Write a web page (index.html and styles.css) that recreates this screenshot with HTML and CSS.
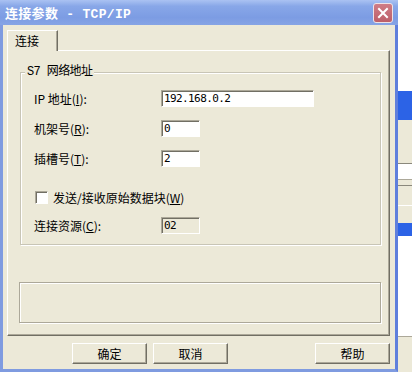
FILE: index.html
```html
<!DOCTYPE html>
<html lang="zh-CN">

<head>
    <meta charset="UTF-8">
    <title>连接参数 - TCP/IP</title>
    <link rel="stylesheet" href="styles.css">
</head>

<body>
    <div class="screen">
        <div class="window">
            <div class="titlebar">
                <span class="title">连接参数 - TCP/IP</span>
                <span class="close">
                    <svg width="12" height="12" viewBox="0 0 12 12">
                        <path d="M2 2 L10 10 M10 2 L2 10" stroke="#fff" stroke-width="2" stroke-linecap="square" />
                    </svg>
                </span>
            </div>
            <div class="frame">
                <div class="tabs">
                    <div class="tab">连接</div>
                </div>
                <div class="panel">
                    <fieldset class="group">
                        <legend>S7 网络地址</legend>
                        <div class="row">
                            <label>IP 地址(<u>I</u>):</label>
                            <div class="field wide">192.168.0.2</div>
                        </div>
                        <div class="row gap">
                            <label>机架号(<u>R</u>):</label>
                            <div class="field">0</div>
                        </div>
                        <div class="row gap">
                            <label>插槽号(<u>T</u>):</label>
                            <div class="field">2</div>
                        </div>
                        <div class="row check">
                            <span class="box"></span>
                            <span>发送/接收原始数据块(<u>W</u>)</span>
                        </div>
                        <div class="row res">
                            <label>连接资源(<u>C</u>):</label>
                            <div class="field readonly">02</div>
                        </div>
                    </fieldset>
                    <div class="status"></div>
                </div>
                <div class="buttons">
                    <button class="btn">确定</button>
                    <button class="btn">取消</button>
                    <button class="btn help">帮助</button>
                </div>
            </div>
        </div>
        <div class="side">
            <div class="s-white top"></div>
            <div class="s-blue first"></div>
            <div class="s-beige tall"></div>
            <div class="s-white mid"></div>
            <div class="s-beige short"></div>
            <div class="s-beige row2"></div>
            <div class="s-beige row3"></div>
            <div class="s-blue second"></div>
            <div class="s-white fill"></div>
            <div class="s-beige bottom"></div>
        </div>
    </div>
</body>

</html>
```

FILE: styles.css
```css
body {
    margin: 0;
    background: #fff;
    font-family: "Noto Sans CJK SC", sans-serif;
    font-size: 12px;
    color: #000;
}

.screen {
    display: flex;
    width: 412px;
    height: 372px;
    overflow: hidden;
}

.window {
    width: 398px;
    height: 372px;
    flex: none;
    display: flex;
    flex-direction: column;
}

.titlebar {
    height: 25px;
    flex: none;
    display: flex;
    align-items: center;
    justify-content: space-between;
    padding: 0 5px;
    background: linear-gradient(#aac2f2, #88a7e8 25%, #7c9ce3 70%, #86a4e5);
}

.title {
    color: #fff;
    font-weight: bold;
    font-size: 13px;
    font-family: "Liberation Mono", "Noto Sans CJK SC", monospace;
    letter-spacing: 0.3px;
}

.close {
    width: 18px;
    height: 18px;
    border: 1px solid #efe3e6;
    border-radius: 3px;
    background: linear-gradient(#cf7d86, #bd5f69);
    display: flex;
    align-items: center;
    justify-content: center;
}

.frame {
    flex: 1;
    background: #ece9d8;
    border: 3px solid #7f9be0;
    border-top: 0;
    border-right-color: #5f7fdc;
    display: flex;
    flex-direction: column;
    padding: 0 5px 0 4px;
}

.tabs {
    height: 25px;
    flex: none;
    display: flex;
    align-items: flex-end;
}

.tab {
    position: relative;
    z-index: 1;
    box-sizing: border-box;
    width: 51px;
    height: 21px;
    margin-bottom: -1px;
    padding: 2px 0 0 7px;
    background: #ece9d8;
    border-left: 1px solid #fff;
    border-top: 1px solid #fff;
    border-right: 1px solid #716f64;
    box-shadow: inset -1px 0 #aca899;
    line-height: 16px;
}

.panel {
    box-sizing: border-box;
    height: 286px;
    flex: none;
    border-top: 1px solid #fff;
    border-left: 1px solid #fff;
    border-right: 1px solid #716f64;
    border-bottom: 1px solid #716f64;
    box-shadow: inset -1px -1px #aca899;
    padding: 0 8px 0 12px;
}

.group {
    margin: 14px 0 0;
    padding: 11px 7px 10px 13px;
    border: 1px solid #c8c5b6;
    box-shadow: 1px 1px 0 #fff, inset 1px 1px 0 #fff;
}

.group legend {
    margin-left: -9px;
    padding: 0 2px;
    background: #ece9d8;
    line-height: 14px;
    font-family: "Liberation Mono", "Noto Sans CJK SC", monospace;
    letter-spacing: -0.6px;
}

.row {
    display: flex;
    align-items: center;
    height: 17px;
    line-height: 17px;
}

.row.gap {
    margin-top: 13px;
}

.row.check {
    margin-top: 22px;
    padding-left: 1px;
}

.row.res {
    margin-top: 11px;
}

.row label {
    width: 127px;
    flex: none;
}

.field {
    box-sizing: border-box;
    width: 39px;
    height: 17px;
    background: #fff;
    border-top: 1px solid #aca899;
    border-left: 1px solid #aca899;
    border-right: 1px solid #fff;
    border-bottom: 1px solid #fff;
    box-shadow: inset 1px 1px #716f64;
    padding-left: 2px;
    font-family: "DejaVu Sans Mono", monospace;
    font-size: 11px;
    letter-spacing: -0.6px;
    line-height: 15px;
}

.field.wide {
    width: 153px;
}

.field.readonly {
    background: #ece9d8;
}

.box {
    box-sizing: border-box;
    width: 13px;
    height: 13px;
    margin-right: 5px;
    background: #fff;
    border-top: 1px solid #aca899;
    border-left: 1px solid #aca899;
    border-right: 1px solid #fff;
    border-bottom: 1px solid #fff;
    box-shadow: inset 1px 1px #716f64;
}

.status {
    box-sizing: border-box;
    height: 41px;
    margin: 37px 0 0 -1px;
    border: 1px solid #aca899;
    box-shadow: 1px 1px 0 #fff, inset 1px 1px 0 #fff;
}

.buttons {
    display: flex;
    gap: 6px;
    margin-top: 7px;
    padding-left: 65px;
}

.btn {
    box-sizing: border-box;
    width: 75px;
    height: 21px;
    padding: 0;
    background: #ece9d8;
    border-top: 1px solid #fff;
    border-left: 1px solid #fff;
    border-right: 1px solid #716f64;
    border-bottom: 1px solid #716f64;
    box-shadow: inset -1px -1px #aca899;
    font-family: "Noto Sans CJK SC", sans-serif;
    font-size: 12px;
    color: #000;
}

.btn.help {
    margin-left: auto;
}

.side {
    flex: 1;
    display: flex;
    flex-direction: column;
}

.s-white {
    background: #fff;
}

.s-blue {
    background: #2c63e6;
}

.s-beige {
    background: #ece9d8;
}

.top {
    height: 91px;
}

.first {
    height: 29px;
}

.tall {
    height: 43px;
    border-bottom: 1px solid #8a887c;
}

.mid {
    height: 15px;
    border-bottom: 1px solid #aca899;
}

.short {
    height: 5px;
    border-bottom: 1px solid #8a887c;
}

.row2 {
    height: 19px;
    border-bottom: 1px solid #fff;
}

.row3 {
    height: 17px;
}

.second {
    height: 13px;
}

.fill {
    height: 100px;
    border-bottom: 1px solid #aca899;
}

.bottom {
    flex: 1;
}
```
